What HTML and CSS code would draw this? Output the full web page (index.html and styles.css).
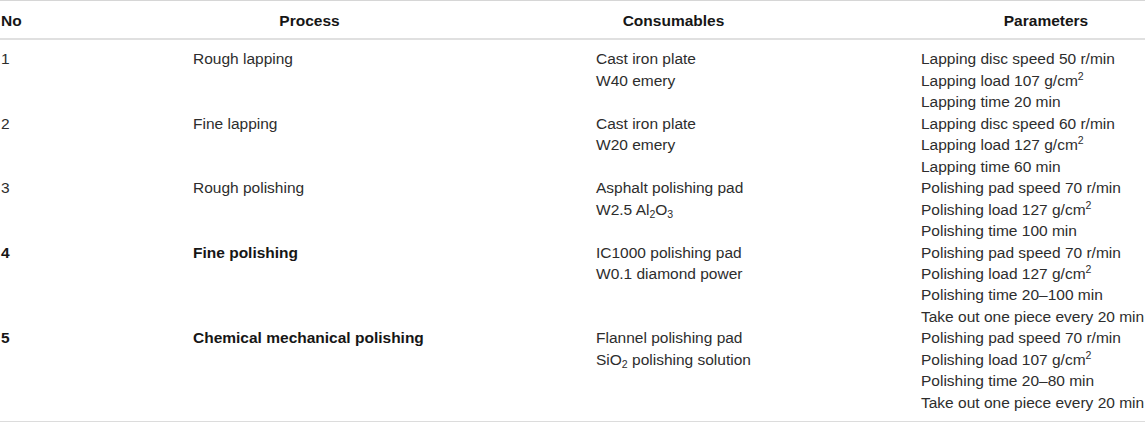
FILE: index.html
```html
<!DOCTYPE html>
<html lang="en">
<head>
<meta charset="utf-8">
<title>Process table</title>
<link rel="stylesheet" href="styles.css">
</head>
<body>
<div class="frame">
<table class="ptable">
  <colgroup>
    <col class="c-no">
    <col class="c-proc">
    <col class="c-cons">
    <col class="c-par">
  </colgroup>
  <thead>
    <tr>
      <th class="h-no">No</th>
      <th>Process</th>
      <th>Consumables</th>
      <th>Parameters</th>
    </tr>
  </thead>
  <tbody>
    <tr>
      <td class="no">1</td>
      <td>Rough lapping</td>
      <td>Cast iron plate<br>W40 emery</td>
      <td>Lapping disc speed 50 r/min<br>Lapping load 107 g/cm<sup>2</sup><br>Lapping time 20 min</td>
    </tr>
    <tr>
      <td class="no">2</td>
      <td>Fine lapping</td>
      <td>Cast iron plate<br>W20 emery</td>
      <td>Lapping disc speed 60 r/min<br>Lapping load 127 g/cm<sup>2</sup><br>Lapping time 60 min</td>
    </tr>
    <tr>
      <td class="no">3</td>
      <td>Rough polishing</td>
      <td>Asphalt polishing pad<br>W2.5 Al<sub>2</sub>O<sub>3</sub></td>
      <td>Polishing pad speed 70 r/min<br>Polishing load 127 g/cm<sup>2</sup><br>Polishing time 100 min</td>
    </tr>
    <tr>
      <td class="no strong">4</td>
      <td class="strong">Fine polishing</td>
      <td>IC1000 polishing pad<br>W0.1 diamond power</td>
      <td>Polishing pad speed 70 r/min<br>Polishing load 127 g/cm<sup>2</sup><br>Polishing time 20–100 min<br>Take out one piece every 20 min</td>
    </tr>
    <tr>
      <td class="no strong">5</td>
      <td class="strong">Chemical mechanical polishing</td>
      <td>Flannel polishing pad<br>SiO<sub>2</sub> polishing solution</td>
      <td>Polishing pad speed 70 r/min<br>Polishing load 107 g/cm<sup>2</sup><br>Polishing time 20–80 min<br>Take out one piece every 20 min</td>
    </tr>
  </tbody>
</table>
</div>
</body>
</html>
```

FILE: styles.css
```css
html, body {
  margin: 0;
  padding: 0;
  background: #ffffff;
}

.frame {
  width: 1145px;
  overflow: hidden;
}

.ptable {
  width: 1256px;
  table-layout: fixed;
  border-collapse: collapse;
  font-family: "Liberation Sans", Arial, sans-serif;
  font-size: 15.5px;
  line-height: 21.45px;
  color: #2d2d2d;
}

.c-no { width: 108px; }
.c-proc { width: 403px; }
.c-cons { width: 325px; }
.c-par { width: 420px; }

.ptable thead tr {
  border-top: 1px solid #d6d6d6;
  border-bottom: 2px solid #e0e0e0;
}

.ptable th {
  font-weight: bold;
  color: #161616;
  text-align: center;
  padding: 9px 0 7px 0;
  white-space: nowrap;
}

.ptable th.h-no {
  text-align: left;
  padding-left: 1px;
}

.ptable td {
  vertical-align: top;
  text-align: left;
  padding: 0 0 0 85px;
  white-space: nowrap;
}

.ptable td.no {
  padding-left: 1px;
}

.ptable tbody tr:first-child td {
  padding-top: 8px;
}

.ptable tbody tr:last-child td {
  padding-bottom: 8px;
}

.ptable tbody tr:last-child {
  border-bottom: 2px solid #dcdcdc;
}

.strong {
  font-weight: bold;
  color: #161616;
}

.ptable sup,
.ptable sub {
  font-size: 0.68em;
  line-height: 0;
}

.ptable sup {
  vertical-align: 0.55em;
}

.ptable sub {
  vertical-align: -0.25em;
}
```
